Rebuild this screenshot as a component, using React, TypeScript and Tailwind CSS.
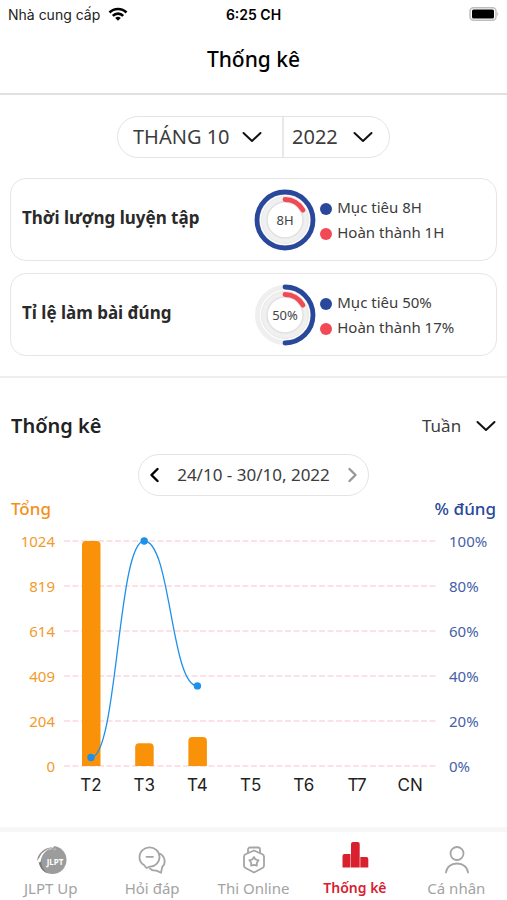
import React, { useState } from "react";

const BAR_COLOR = "#f99209";
const LINE_COLOR = "#1e90ea";

const days = ["T2", "T3", "T4", "T5", "T6", "T7", "CN"];
const totals = [1024, 104, 132];
const percents = [3.8, 100, 35.6];
const totalTicks = [1024, 819, 614, 409, 204, 0];
const percentTicks = [100, 80, 60, 40, 20, 0];

const stats = [
  {
    title: "Thời lượng luyện tập",
    center: "8H",
    goal: "Mục tiêu 8H",
    done: "Hoàn thành 1H",
    goalRatio: 1,
    doneRatio: 0.17,
  },
  {
    title: "Tỉ lệ làm bài đúng",
    center: "50%",
    goal: "Mục tiêu 50%",
    done: "Hoàn thành 17%",
    goalRatio: 0.5,
    doneRatio: 0.17,
  },
];

type RingProps = { label: string; goal: number; done: number };

const Ring = ({ label, goal, done }: RingProps) => (
  <svg viewBox="0 0 62 62" className="size-[62px] shrink-0">
    <g fill="none" strokeLinecap="round">
      <circle cx="31" cy="31" r="27.5" stroke="#efefef" strokeWidth="5" />
      <circle cx="31" cy="31" r="20.5" stroke="#f0f0f0" strokeWidth="6" />
      <circle cx="31" cy="31" r="18" stroke="#e2e2e2" strokeWidth="1.5" />
      <circle cx="31" cy="31" r="23.5" stroke="#e8e8e8" strokeWidth="1" />
      <circle
        cx="31"
        cy="31"
        r="28"
        stroke="#29489b"
        strokeWidth="4.8"
        pathLength="100"
        strokeDasharray={`${goal * 100} 100`}
        transform="rotate(-90 31 31)"
      />
      <circle
        cx="31"
        cy="31"
        r="20.5"
        stroke="#f24a55"
        strokeWidth="4.8"
        pathLength="100"
        strokeDasharray={`${done * 100} 100`}
        transform="rotate(-90 31 31)"
      />
    </g>
    <text
      x="31"
      y="36"
      textAnchor="middle"
      className="fill-[#444444] text-[13px]"
    >
      {label}
    </text>
  </svg>
);

const Chart = () => {
  const top = 20;
  const height = 225;
  const dayX = (i: number) => 91 + i * 53.2;
  const percentY = (p: number) => top + height * (1 - p / 100);

  // Smooth curve with flat tangents on every point
  const line = percents
    .map((p, i) => {
      const x = dayX(i);
      const y = percentY(p);
      if (i === 0) return `M${x} ${y}`;
      const mid = (dayX(i - 1) + x) / 2;
      return `C${mid} ${percentY(percents[i - 1])} ${mid} ${y} ${x} ${y}`;
    })
    .join("");

  return (
    <svg viewBox="0 0 507 276" className="block w-full">
      {percentTicks.map((tick, i) => {
        const y = top + i * 45;
        return (
          <g key={tick}>
            <line
              x1="64"
              x2="438"
              y1={y}
              y2={y}
              stroke="#fbd8de"
              strokeWidth="1.3"
              strokeDasharray="6 2.5"
            />
            <text
              x="55"
              y={y + 6}
              textAnchor="end"
              className="fill-[#f39a2b] text-[15px]"
            >
              {totalTicks[i]}
            </text>
            <text x="449" y={y + 6} className="fill-[#465fa9] text-[15px]">
              {tick}%
            </text>
          </g>
        );
      })}
      {totals.map((total, i) => {
        const h = (total / 1024) * height;
        const x = dayX(i) - 9;
        const y = top + height - h;
        return (
          <path
            key={i}
            d={`M${x} ${y + h}V${y + 4}q0 -4 4 -4h10.5q4 0 4 4V${y + h}Z`}
            fill={BAR_COLOR}
          />
        );
      })}
      <path d={line} fill="none" stroke={LINE_COLOR} strokeWidth="1.3" />
      {percents.map((p, i) => (
        <circle key={i} cx={dayX(i)} cy={percentY(p)} r="3.7" fill={LINE_COLOR} />
      ))}
      {days.map((day, i) => (
        <text
          key={day}
          x={dayX(i)}
          y="270"
          textAnchor="middle"
          className="fill-[#222222] font-[Inter,sans-serif] text-[17px]"
        >
          {day}
        </text>
      ))}
    </svg>
  );
};

const DownIcon = () => (
  <svg
    viewBox="0 0 20 12"
    className="pointer-events-none h-3 w-5"
    fill="none"
    stroke="#111111"
    strokeWidth="2"
    strokeLinecap="round"
    strokeLinejoin="round"
  >
    <path d="M1.5 2L10 10l8.500-8" />
  </svg>
);

const SideIcon = ({ d }: { d: string }) => (
  <svg
    viewBox="0 0 10 16"
    className="h-4 w-[10px]"
    fill="none"
    stroke="currentColor"
    strokeWidth="2.4"
    strokeLinecap="round"
    strokeLinejoin="round"
  >
    <path d={d} />
  </svg>
);

const LogoIcon = () => (
  <svg viewBox="0 0 32 32" className="size-8">
    <circle cx="17.5" cy="16" r="14" fill="#9c9c9c" />
    <path d="M9 9C4 16 6 25 13 29.300 5 27 2 18 6 10Z" fill="#777777" />
    <path d="M0 19V0h20l-2 4C11 5 7 10 5.500 18Z" fill="#ffffff" />
    <path d="M2 17C3 9 9 3.500 19 3c-7 1.500-12 5-14 9.500Z" fill="#8d8d8d" />
    <path d="M13 6l3-3 1 3zM18 5l3-1-1 3z" fill="#b9b9b9" />
    <text
      x="20"
      y="21"
      textAnchor="middle"
      className="fill-white text-[8px] font-bold"
    >
      JLPT
    </text>
  </svg>
);

const ChatIcon = () => (
  <svg
    viewBox="0 0 32 32"
    className="size-8"
    fill="none"
    stroke="#a5a5a5"
    strokeWidth="1.8"
    strokeLinecap="round"
    strokeLinejoin="round"
  >
    <path d="M10.500 24L8 21C4.500 19 3.500 16 3.500 13.200A10 9.700 0 1 1 14 22.700Z" />
    <path d="M10.500 12.800h6.500" />
    <path d="M24 9.800c5.500 3 6 9.700 2.200 13.200L25 28.800l-4.500-2.200c-3 .3-5-.3-6.500-2" />
  </svg>
);

const MedalIcon = () => (
  <svg
    viewBox="0 0 32 32"
    className="size-8"
    fill="none"
    stroke="#a5a5a5"
    strokeWidth="1.8"
    strokeLinejoin="round"
  >
    <path d="M10 9V5.500a2 2 0 0 1 2-2h8a2 2 0 0 1 2 2V9" />
    <path d="M16 6.500l8.500 3.800q1.500.8 1.500 2.500v8.700q0 1.700-1.500 2.500L16 28.500 7.500 24Q6 23.200 6 21.500v-8.700q0-1.700 1.500-2.500Z" />
    <path d="M16 13l1.600 2.400 3 .9-1.800 2.400v3L16 20.900l-2.800.8v-3l-1.800-2.400 3-.9Z" />
  </svg>
);

const StatsIcon = () => (
  <svg viewBox="0 0 32 32" className="size-8 overflow-visible" fill="#d9202f">
    <path d="M3.500 12q0-2 2-2h6v13.500h-8Z" />
    <path d="M12 0q0-2 2-2h4.700q2 0 2 2v23.500H12Z" />
    <path d="M21.300 13h6q2 0 2 2v8.500h-8Z" />
  </svg>
);

const UserIcon = () => (
  <svg
    viewBox="0 0 32 32"
    className="size-8"
    fill="none"
    stroke="#a5a5a5"
    strokeWidth="1.8"
    strokeLinecap="round"
  >
    <circle cx="17" cy="9.500" r="6.500" />
    <path d="M6 28.500c.5-5.500 5-9 11-9s10.500 3.500 11 9" />
  </svg>
);

const tabs = [
  { label: "JLPT Up", icon: <LogoIcon /> },
  { label: "Hỏi đáp", icon: <ChatIcon /> },
  { label: "Thi Online", icon: <MedalIcon /> },
  { label: "Thống kê", icon: <StatsIcon />, active: true },
  { label: "Cá nhân", icon: <UserIcon /> },
];

const App = () => {
  const [month, setMonth] = useState("10");
  const [year, setYear] = useState("2022");
  const [range, setRange] = useState("week");

  return (
    <div className="flex min-h-screen flex-col bg-white font-['Noto_Sans',sans-serif] text-[#3c3c3c]">
      {/* STATUS BAR */}
      <div className="grid h-7 grid-cols-3 items-center px-2 font-[Inter,sans-serif] text-[14px] text-[#222222]">
        <div className="flex items-center gap-2 whitespace-nowrap">
          <span>Nhà cung cấp</span>
          <svg viewBox="0 0 20 14" className="h-[14px] w-5">
            <g fill="none" stroke="#000000" strokeWidth="2.6">
              <path d="M1.500 5.500a12 12 0 0 1 17 0" />
              <path d="M4.800 8.800a7.400 7.400 0 0 1 10.400 0" />
            </g>
            <path d="M10 13.800L7.200 11a4 4 0 0 1 5.600 0Z" />
          </svg>
        </div>
        <span className="text-center font-semibold text-black">6:25 CH</span>
        <svg viewBox="0 0 30 14" className="h-[14px] w-[30px] justify-self-end">
          <rect x="1" y="0.8" width="26" height="12.400" rx="3.500" fill="#ffffff" stroke="#bdbdbd" strokeWidth="1.5" />
          <rect x="3" y="2.500" width="22" height="9" rx="1.500" />
          <path d="M28.300 5q2 2 0 4Z" fill="#bdbdbd" />
        </svg>
      </div>

      <header className="flex h-[67px] items-center justify-center border-b-2 border-[#e0e0e0] pb-[2px]">
        <h1 className="text-[21px] font-medium text-black">Thống kê</h1>
      </header>

      <main>
        {/* MONTH / YEAR */}
        <div className="mt-[21px] flex justify-center">
          <div className="flex h-[42px] items-center rounded-full border border-[#e4e4e4] text-[20px]">
            <label className="flex h-full items-center gap-3 border-r-2 border-[#e8e8e8] pr-5 pl-[15px]">
              <select
                aria-label="Tháng"
                value={month}
                onChange={(e) => setMonth(e.target.value)}
                className="appearance-none bg-transparent outline-none"
              >
                <option value="10">THÁNG 10</option>
              </select>
              <DownIcon />
            </label>
            <label className="flex items-center gap-[15px] pr-4 pl-2">
              <select
                aria-label="Năm"
                value={year}
                onChange={(e) => setYear(e.target.value)}
                className="appearance-none bg-transparent outline-none"
              >
                <option value="2022">2022</option>
              </select>
              <DownIcon />
            </label>
          </div>
        </div>

        {/* GOALS */}
        <div className="mt-5 flex flex-col gap-3 px-[10px]">
          {stats.map((stat) => (
            <section
              key={stat.title}
              className="flex h-[83px] items-center rounded-2xl border border-[#e6e6e6] pl-[11px]"
            >
              <h2 className="w-[49%] pb-1 text-[17px] font-bold text-[#2a2a2a]">
                {stat.title}
              </h2>
              <div className="flex flex-1 items-center gap-1">
                <Ring
                  label={stat.center}
                  goal={stat.goalRatio}
                  done={stat.doneRatio}
                />
                <ul className="flex flex-col gap-[3px] text-[15px] whitespace-nowrap">
                  <li className="flex items-center gap-[5px]">
                    <span className="mt-1 size-3 rounded-full bg-[#29489b]" />
                    {stat.goal}
                  </li>
                  <li className="flex items-center gap-[5px]">
                    <span className="mt-1 size-3 rounded-full bg-[#f24a55]" />
                    {stat.done}
                  </li>
                </ul>
              </div>
            </section>
          ))}
        </div>

        {/* WEEKLY CHART */}
        <section className="mt-5 border-t-2 border-[#eeeeee] pt-8">
          <div className="flex h-8 items-center justify-between px-[11px]">
            <h2 className="text-[20px] font-semibold text-[#222222]">
              Thống kê
            </h2>
            <label className="flex items-center gap-[14px] text-[17px]">
              <select
                aria-label="Khoảng thời gian"
                value={range}
                onChange={(e) => setRange(e.target.value)}
                className="appearance-none bg-transparent outline-none"
              >
                <option value="week">Tuần</option>
              </select>
              <DownIcon />
            </label>
          </div>

          <div className="mt-3 flex justify-center">
            <div className="flex h-[42px] items-center gap-[18px] rounded-full border border-[#e4e4e4] px-[10px] text-[17px]">
              <button aria-label="Tuần trước" className="text-black">
                <SideIcon d="M8.500 2L2.500 8l6 6" />
              </button>
              <span>24/10 - 30/10, 2022</span>
              <button aria-label="Tuần sau" className="text-[#999999]">
                <SideIcon d="M1.500 2l6 6-6 6" />
              </button>
            </div>
          </div>

          <div className="flex h-[25px] items-center justify-between px-[11px] text-[17px] font-medium">
            <span className="text-[#f39117]">Tổng</span>
            <span className="text-[#29489b]">% đúng</span>
          </div>
          <Chart />
        </section>
      </main>

      {/* TABS */}
      <nav className="mt-auto flex border-t-[5px] border-[#f7f7f7] pt-3">
        {tabs.map(({ label, icon, active }) => (
          <a
            key={label}
            href="#"
            className={
              active
                ? "flex flex-1 flex-col items-center text-[14px] font-semibold text-[#d9202f]"
                : "flex flex-1 flex-col items-center text-[15px] text-[#a3a3a3]"
            }
          >
            {icon}
            <span className="leading-6">{label}</span>
          </a>
        ))}
      </nav>
    </div>
  );
};

export default App;
